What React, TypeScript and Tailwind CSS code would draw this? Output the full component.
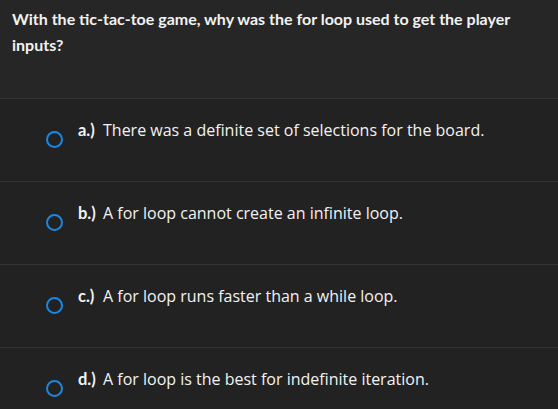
import React from 'react';

const options = [
  { label: 'a.)', text: 'There was a definite set of selections for the board.' },
  { label: 'b.)', text: 'A for loop cannot create an infinite loop.' },
  { label: 'c.)', text: 'A for loop runs faster than a while loop.' },
  { label: 'd.)', text: 'A for loop is the best for indefinite iteration.' },
];

const Option = ({ label, text }: { label: string; text: string }) => (
  <div className="flex h-[83px] border-t border-[#333333] bg-[#222222] pl-[46px] pt-[21px]">
    <span className="mt-[11px] h-[17px] w-[17px] shrink-0 rounded-full border-2 border-[#1b87e0]" />
    <p className="ml-[15px] text-[16px] leading-[20px] text-[#f2f2f2]">
      <span className="inline-block w-[25px] font-['Lato',sans-serif] text-[16.5px] font-bold">{label}</span>
      <span>{text}</span>
    </p>
  </div>
);

export default function App() {
  return (
    <div className="h-[409px] w-[558px] overflow-hidden bg-[#222222] font-['Open_Sans',sans-serif]">
      <div className="h-[98px] bg-[#262626] px-3 pt-[6px]">
        <h1 className="font-['Lato',sans-serif] text-[16px] font-bold leading-[26px] text-[#f2f2f2]">
          With the tic-tac-toe game, why was the for loop used to get the player inputs?
        </h1>
      </div>
      {options.map((o) => (
        <Option key={o.label} {...o} />
      ))}
    </div>
  );
}
